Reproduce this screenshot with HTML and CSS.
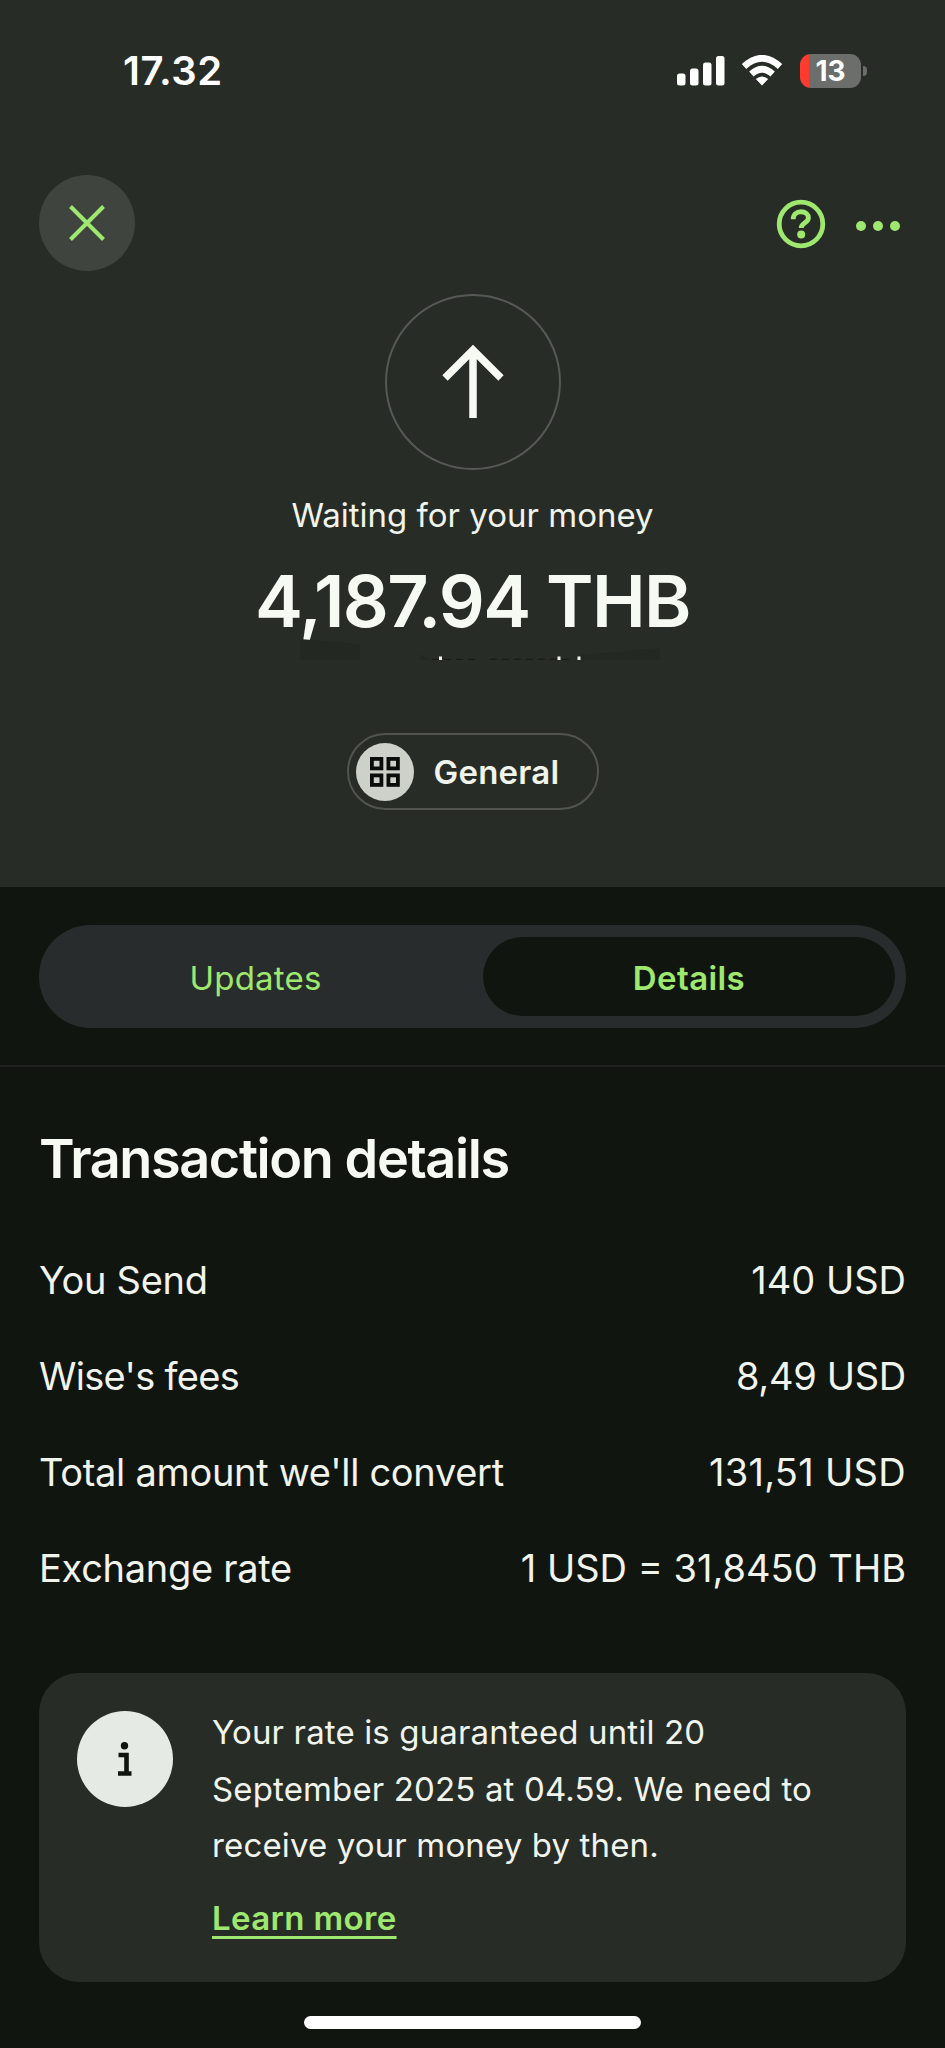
FILE: index.html
```html
<!DOCTYPE html>
<html lang="en">
<head>
    <meta charset="UTF-8">
    <meta name="viewport" content="width=device-width, initial-scale=1.0">
    <title>Transaction details</title>
    <link rel="stylesheet" href="styles.css">
</head>
<body>
    <div class="screen">
        <header class="hero">
            <div class="status-bar">
                <div class="time">17.32</div>
                <div class="status-icons">
                    <svg class="signal" width="48" height="32" viewBox="0 0 48 32" fill="#fff">
                        <rect x="0" y="18.5" width="8.5" height="12" rx="2.5"/>
                        <rect x="13" y="13.5" width="8.5" height="17" rx="2.5"/>
                        <rect x="26" y="7.5" width="8.5" height="23" rx="2.5"/>
                        <rect x="39" y="1" width="8.5" height="29.5" rx="2.5"/>
                    </svg>
                    <svg class="wifi" width="42" height="32" viewBox="0 0 42 32">
                        <path d="M3 11.5Q21 -5 39 11.5" fill="none" stroke="#fff" stroke-width="6.5"/>
                        <path d="M10.3 19Q21 9.5 31.7 19" fill="none" stroke="#fff" stroke-width="6.5"/>
                        <path d="M14.8 24Q21 19 27.2 24L21 30.5Z" fill="#fff"/>
                    </svg>
                    <div class="battery"><span>13</span></div>
                    <div class="battery-cap"></div>
                </div>
            </div>

            <nav class="top-bar">
                <button class="close-btn">
                    <svg width="40" height="40" viewBox="0 0 40 40" fill="none" stroke="#9fe870" stroke-width="4">
                        <path d="M3.5 3.5L36.5 36.5M36.5 3.5L3.5 36.5"/>
                    </svg>
                </button>
                <div class="actions">
                    <svg width="50" height="50" viewBox="0 0 50 50" fill="none" stroke="#9fe870">
                        <circle cx="25" cy="25" r="21.8" stroke-width="4.8"/>
                        <path d="M17.2 20.3C17.2 15.6 20.5 12.8 25 12.8C29.6 12.8 32.4 15.6 32.4 19C32.4 24 25.2 23.5 25.2 29" stroke-width="4.9"/>
                        <circle cx="25.2" cy="35.4" r="4" fill="#9fe870" stroke="none"/>
                    </svg>
                    <svg width="46" height="50" viewBox="0 0 46 50" fill="#9fe870">
                        <circle cx="6" cy="27" r="5"/>
                        <circle cx="23" cy="27" r="5"/>
                        <circle cx="40" cy="27" r="5"/>
                    </svg>
                </div>
            </nav>

            <div class="avatar">
                <svg width="64" height="76" viewBox="0 0 64 76" fill="none" stroke="#f6faf3" stroke-width="7.5">
                    <path d="M32 5V74M4 34L32 6L60 34"/>
                </svg>
            </div>
            <p class="status">Waiting for your money</p>
            <h1 class="amount">4,187.94 THB</h1>
            <svg class="residue" width="470" height="24" viewBox="0 0 470 24">
                <path d="M62 3L122 8V24H62ZM182 18L192 24H182ZM342 19L422 12V24H342Z" fill="#242823"/>
                <path d="M194 23.5H242M252 23.5H336" stroke="#191c18" stroke-width="1.5" stroke-dasharray="7 5"/>
                <path d="M201 20.5h3v3.5h-3zM319.500 20.5h3v3.5h-3zM339.500 20.5h3v3.5h-3z" fill="#eef2ea"/>
            </svg>
            <div class="category">
                <span class="category-icon">
                    <svg width="30" height="30" viewBox="0 0 30 30" fill="none" stroke="#0b0c0b" stroke-width="3.8">
                        <rect x="1.9" y="1.9" width="9.5" height="9.5"/>
                        <rect x="18.4" y="1.9" width="9.5" height="9.5"/>
                        <rect x="1.9" y="18.4" width="9.5" height="9.5"/>
                        <rect x="18.4" y="18.4" width="9.5" height="9.5"/>
                    </svg>
                </span>
                <span class="category-name">General</span>
            </div>
        </header>

        <div class="tabs-wrap">
            <div class="tabs">
                <div class="tab"><span>Updates</span></div>
                <div class="tab active"><span>Details</span></div>
            </div>
        </div>

        <main class="content">
            <h2>Transaction details</h2>
            <div class="row"><span class="label">You Send</span><span>140 USD</span></div>
            <div class="row"><span class="label tight">Wise's fees</span><span class="label">8,49 USD</span></div>
            <div class="row"><span class="label">Total amount we'll convert</span><span class="wide">131,51 USD</span></div>
            <div class="row"><span class="label">Exchange rate</span><span>1 USD = 31,8450 THB</span></div>

            <div class="notice">
                <div class="info-icon">
                    <svg width="14" height="34" viewBox="0 0 14 34">
                        <circle cx="6.5" cy="3.8" r="3.7" fill="#111510"/>
                        <path d="M0.500 13H8.5V30M0 31.5H13.5" fill="none" stroke="#111510" stroke-width="4.6"/>
                    </svg>
                </div>
                <div class="notice-text">
                    <p>Your rate is guaranteed until 20<br>September 2025 at 04.59. We need to<br>receive your money by then.</p>
                    <a class="learn-more">Learn more</a>
                </div>
            </div>
        </main>
        <div class="home-bar"></div>
    </div>
</body>
</html>
```

FILE: styles.css
```css
* {
    box-sizing: border-box;
}
body {
    margin: 0;
    background: #111510;
    color: #f0f4ed;
    font-family: Inter, "Liberation Sans", sans-serif;
}
h1, h2, p {
    margin: 0;
}
svg {
    display: block;
    flex: none;
}
.screen {
    width: 945px;
    height: 2048px;
    overflow: hidden;
}
.hero {
    height: 887px;
    background: #282c27;
    display: flex;
    flex-direction: column;
    align-items: center;
}
.status-bar {
    width: 100%;
    height: 141px;
    padding: 0 78px 0 123px;
    display: flex;
    justify-content: space-between;
    align-items: center;
    color: #fff;
}
.time {
    font-size: 40px;
    font-weight: 600;
    letter-spacing: 0.5px;
}
.status-icons {
    display: flex;
    align-items: center;
}
.wifi {
    margin-left: 16px;
}
.battery {
    width: 61px;
    height: 34px;
    margin-left: 17px;
    border-radius: 11px;
    background: linear-gradient(90deg, #ff3b30 9px, #6b6e6a 9px);
    font-size: 28px;
    font-weight: 700;
    line-height: 34px;
    text-align: center;
}
.battery-cap {
    width: 4px;
    height: 10px;
    margin-left: 2px;
    border-radius: 0 5px 5px 0;
    background: #6b6e6a;
}
.top-bar {
    width: 100%;
    margin-top: 34px;
    padding: 0 44px 0 39px;
    display: flex;
    justify-content: space-between;
    align-items: center;
}
.close-btn {
    width: 96px;
    height: 96px;
    padding: 0;
    border: none;
    border-radius: 50%;
    background: #40443f;
    display: flex;
    justify-content: center;
    align-items: center;
}
.actions {
    margin-top: 2px;
    display: flex;
    gap: 29px;
}
.avatar {
    width: 176px;
    height: 176px;
    margin-top: 23px;
    border: 2px solid #565955;
    border-radius: 50%;
    display: flex;
    justify-content: center;
    align-items: center;
}
.status {
    margin-top: 21px;
    font-size: 33px;
    line-height: 48px;
}
.amount {
    margin-top: 22px;
    font-size: 72px;
    font-weight: 600;
    line-height: 80px;
    letter-spacing: -1.6px;
    color: #f6faf3;
}
.residue {
    margin-top: -5px;
}
.category {
    width: 252px;
    height: 77px;
    margin-top: 73px;
    padding-left: 7px;
    border: 2px solid #51544f;
    border-radius: 39px;
    display: flex;
    align-items: center;
}
.category-icon {
    width: 58px;
    height: 58px;
    border-radius: 50%;
    background: #cdd1ca;
    display: flex;
    justify-content: center;
    align-items: center;
}
.category-name {
    margin-left: 20px;
    font-size: 33px;
    font-weight: 600;
    letter-spacing: 0.2px;
}
.tabs-wrap {
    height: 180px;
    padding: 38px 39px 0;
    border-bottom: 2px solid #1f221e;
}
.tabs {
    height: 103px;
    padding: 12px 11px;
    border-radius: 52px;
    background: #292c2c;
    display: flex;
    gap: 22px;
}
.tab {
    flex: 1;
    padding-top: 2px;
    border-radius: 40px;
    display: flex;
    justify-content: center;
    align-items: center;
    font-size: 33px;
    letter-spacing: 0.2px;
    color: #9fe870;
}
.tab.active {
    flex: none;
    width: 412px;
    background: #111510;
    font-weight: 600;
    letter-spacing: 0.4px;
}
.content {
    padding: 60px 39px 0;
}
h2 {
    margin-bottom: 41px;
    font-size: 54px;
    font-weight: 600;
    line-height: 64px;
    letter-spacing: -1.4px;
    color: #f6faf3;
}
.row {
    height: 96px;
    display: flex;
    justify-content: space-between;
    align-items: center;
    font-size: 38px;
}
.label {
    letter-spacing: -0.3px;
}
.tight {
    letter-spacing: -0.7px;
}
.wide {
    letter-spacing: 0.3px;
}
.notice {
    height: 309px;
    margin-top: 57px;
    padding: 31px 38px;
    border-radius: 40px;
    background: #282c27;
    display: flex;
}
.info-icon {
    width: 96px;
    height: 96px;
    margin-top: 7px;
    flex: none;
    border-radius: 50%;
    background: #e6eae4;
    display: flex;
    justify-content: center;
    align-items: center;
}
.notice-text {
    margin-left: 39px;
    font-size: 33px;
    line-height: 56.5px;
    letter-spacing: 0.14px;
    white-space: nowrap;
}
.learn-more {
    display: inline-block;
    margin-top: 16px;
    color: #9fe870;
    font-weight: 600;
    letter-spacing: 0.35px;
    text-decoration: underline;
    text-decoration-thickness: 3px;
    text-underline-offset: 6px;
}
.home-bar {
    width: 337px;
    height: 13px;
    margin: 34px auto 0;
    border-radius: 7px;
    background: #fff;
}
```
